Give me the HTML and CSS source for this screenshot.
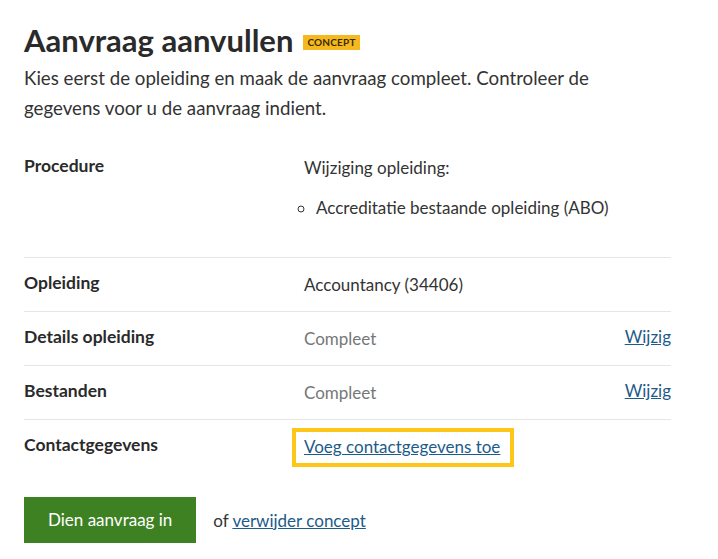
FILE: index.html
```html
<!DOCTYPE html>
<html lang="nl">
<head>
<meta charset="utf-8">
<title>Aanvraag aanvullen</title>
<link rel="stylesheet" href="styles.css">
</head>
<body>
<main class="page">
  <h1 class="title">Aanvraag aanvullen <span class="badge">CONCEPT</span></h1>
  <p class="intro">Kies eerst de opleiding en maak de aanvraag compleet. Controleer de gegevens voor u de aanvraag indient.</p>

  <dl class="summary">
    <div class="row">
      <dt class="key">Procedure</dt>
      <dd class="value">
        <p class="value-p">Wijziging opleiding:</p>
        <ul class="value-list"><li>Accreditatie bestaande opleiding (ABO)</li></ul>
      </dd>
      <dd class="action"></dd>
    </div>
    <div class="row">
      <dt class="key">Opleiding</dt>
      <dd class="value">Accountancy (34406)</dd>
      <dd class="action"></dd>
    </div>
    <div class="row">
      <dt class="key">Details opleiding</dt>
      <dd class="value muted">Compleet</dd>
      <dd class="action"><a class="link" href="#">Wijzig</a></dd>
    </div>
    <div class="row">
      <dt class="key">Bestanden</dt>
      <dd class="value muted">Compleet</dd>
      <dd class="action"><a class="link" href="#">Wijzig</a></dd>
    </div>
    <div class="row last">
      <dt class="key">Contactgegevens</dt>
      <dd class="value"><a class="link focus" href="#">Voeg contactgegevens toe</a></dd>
      <dd class="action"></dd>
    </div>
  </dl>

  <div class="actions">
    <button class="button" type="button">Dien aanvraag in</button>
    <span class="or">of <a class="link" href="#">verwijder concept</a></span>
  </div>
</main>
</body>
</html>
```
FILE: styles.css
```css
* { box-sizing: border-box; }
html, body { margin: 0; padding: 0; background: #fff; }
body {
  font-family: Lato, "Open Sans", "Noto Sans", sans-serif;
  color: #333;
  font-size: 17px;
}
.page {
  padding: 0 47px 0 24px;
}
.title {
  margin: 20px 0 3px;
  font-size: 31px;
  line-height: 40px;
  font-weight: 700;
  color: #2a2a2a;
  display: flex;
  align-items: center;
  gap: 10px;
}
.badge {
  display: inline-block;
  background: #f5b91f;
  color: #3b2a05;
  font-size: 10px;
  font-weight: 700;
  line-height: 15px;
  padding: 0 4px;
  margin-top: 5px;
  letter-spacing: 0.2px;
}
.intro {
  margin: 0 0 18px;
  line-height: 30px;
  font-size: 18.7px;
  max-width: 640px;
}
.summary {
  margin: 0;
}
.row {
  display: flex;
  border-bottom: 1px solid #e6e6e6;
  padding: 12px 0 13px;
}
.row.last { border-bottom: none; }
.key {
  width: 280px;
  flex: none;
  font-weight: 700;
  font-size: 17.5px;
  line-height: 26px;
  color: #2a2a2a;
}
.value {
  flex: 1;
  margin: 0;
  line-height: 26px;
  padding-top: 2px;
}
.value-p { margin: 0 0 14px; }
.value-list {
  margin: 0 0 23px;
  padding-left: 12px;
  list-style: circle;
}
.muted { color: #777; }
.action {
  margin: 0;
  width: 60px;
  text-align: right;
  line-height: 26px;
}
.link {
  color: #1d5b8a;
  text-decoration: underline;
}
.focus {
  display: inline-block;
  line-height: 22px;
  padding: 4px 10px 5px 8px;
  margin: -2px 0 -3px -8px;
  box-shadow: 0 0 0 4px #fcc716;
}
.actions {
  display: flex;
  align-items: center;
  margin-top: 24px;
  gap: 17px;
}
.button {
  font-family: inherit;
  font-size: 17px;
  color: #fff;
  background: #3e8123;
  border: none;
  box-shadow: 0 2px 0 #2a5a17;
  padding: 0 24px;
  height: 46px;
  line-height: 46px;
  border-radius: 0;
}
.or { font-size: 17px; }
```
